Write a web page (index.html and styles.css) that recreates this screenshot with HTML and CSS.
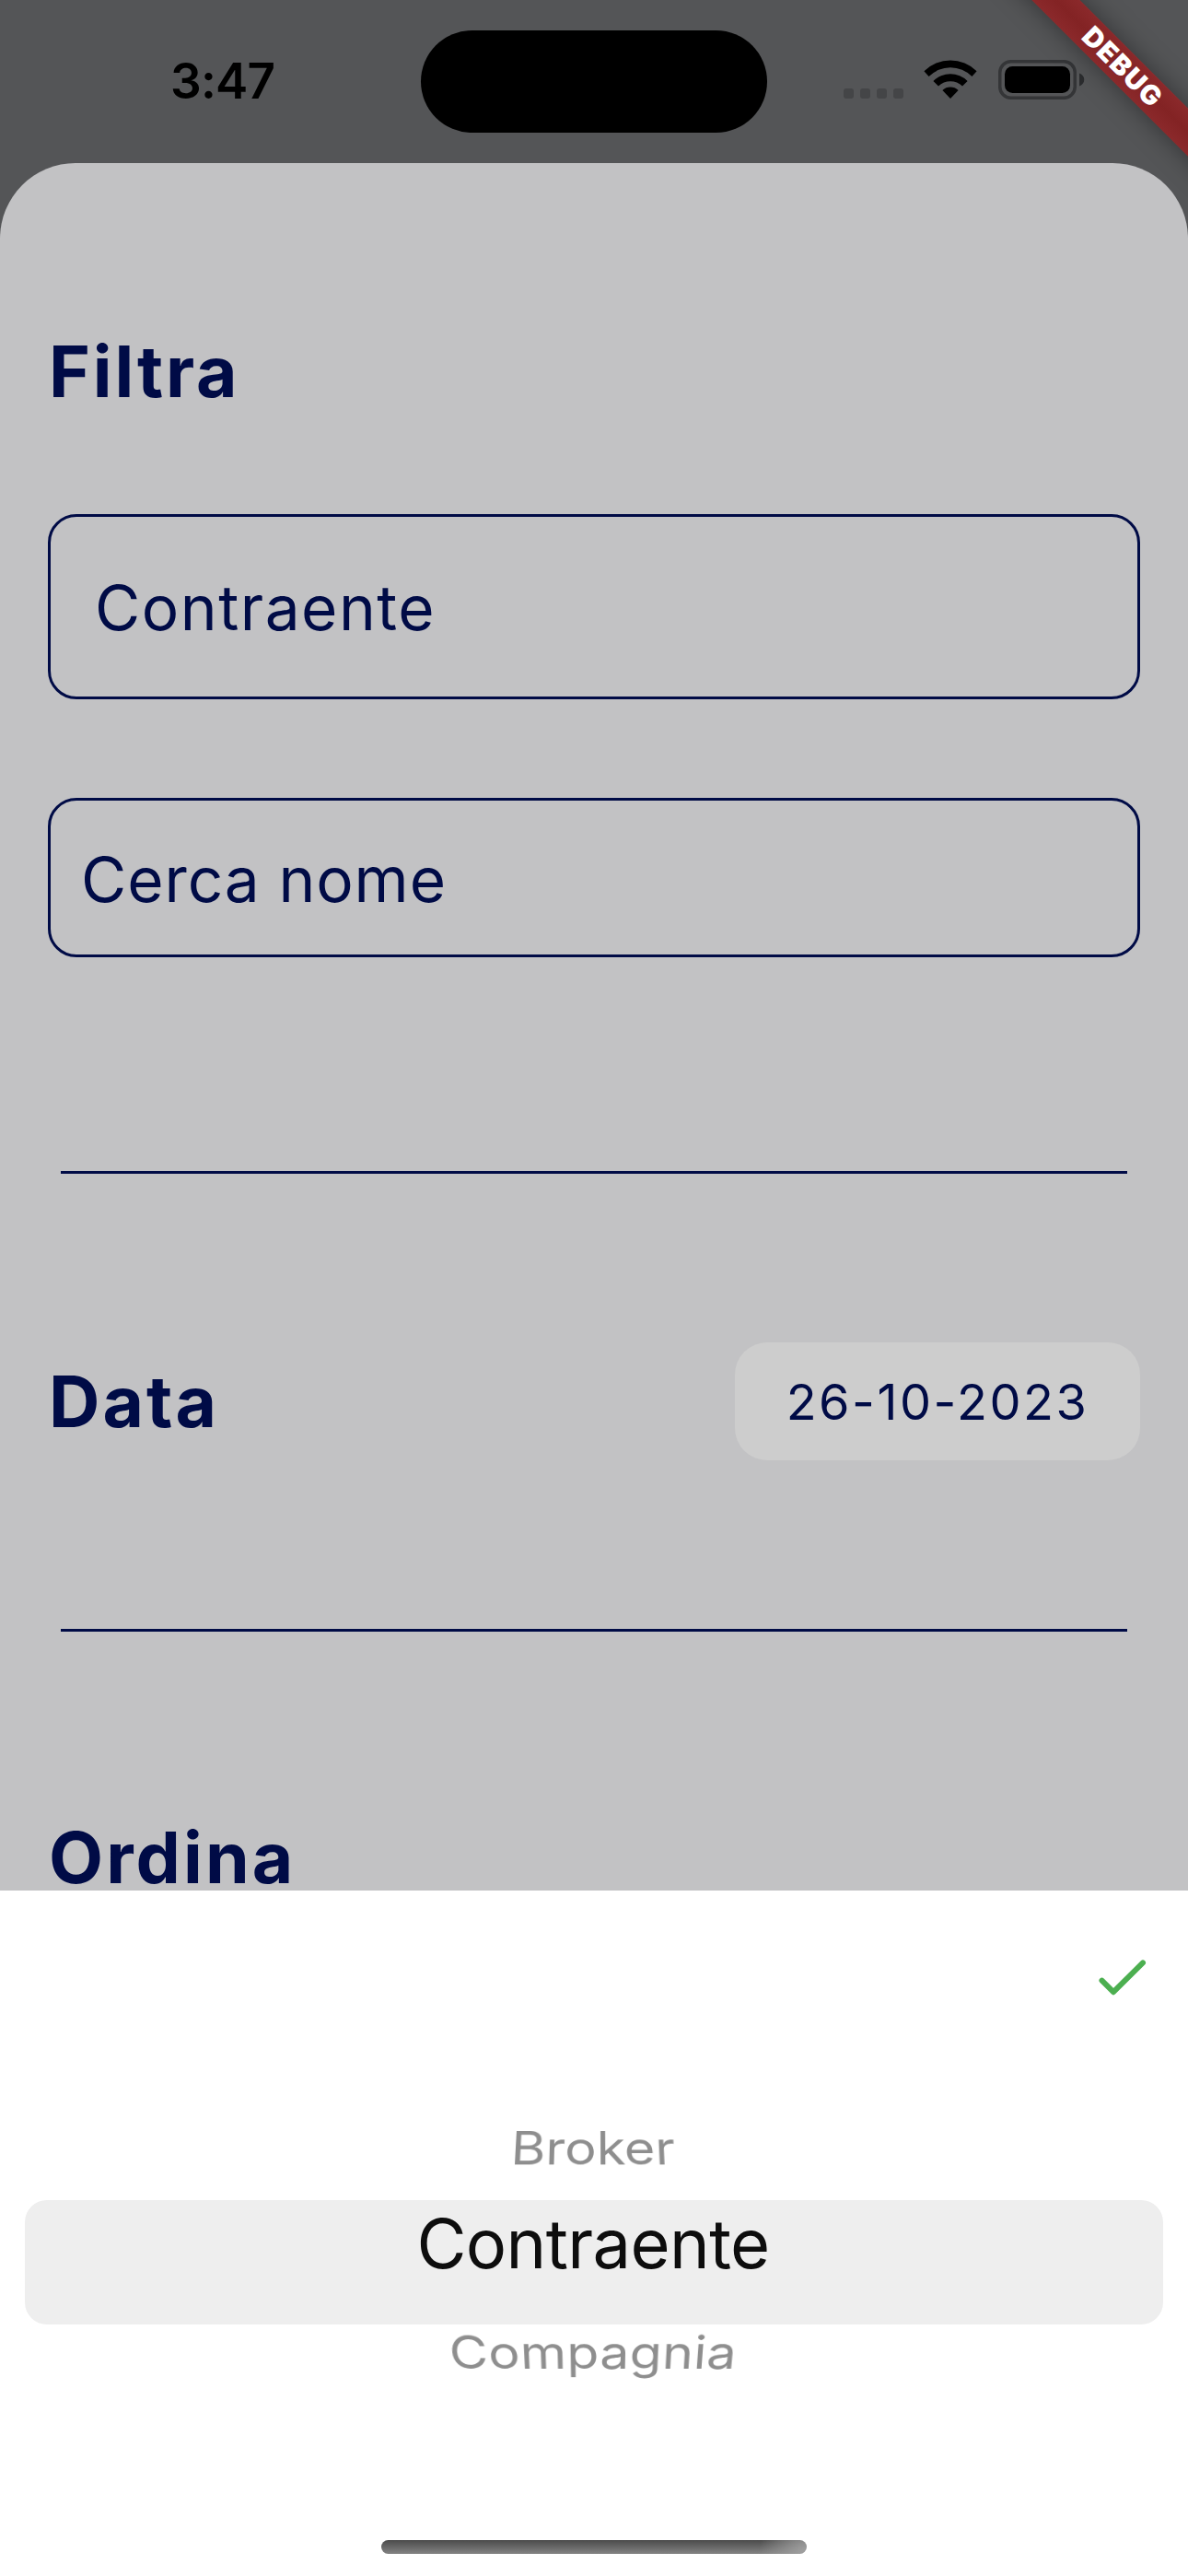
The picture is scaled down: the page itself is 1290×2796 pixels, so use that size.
FILE: index.html
```
<!DOCTYPE html>
<html lang="it">
<head>
<meta charset="utf-8">
<title>Filtra</title>
<link rel="stylesheet" href="styles.css">
</head>
<body>
<div class="screen">
  <header class="status-bar">
    <time class="clock">3:47</time>
    <div class="island"></div>
    <div class="indicators">
      <div class="signal"><i></i><i></i><i></i><i></i></div>
      <svg class="wifi" viewBox="0 0 58 42" width="58" height="42">
        <path d="M0.4 12.3 A40.6 40.6 0 0 1 57.6 12.3 L52.4 18 A33 33 0 0 0 5.6 18 Z"/>
        <path d="M10.4 22.9 A26.5 26.5 0 0 1 47.6 22.9 L42 28.5 A18.5 18.5 0 0 0 16 28.5 Z"/>
        <path d="M20.4 33 A12.5 12.5 0 0 1 37.6 33 L29 42 Z"/>
      </svg>
      <svg class="battery" viewBox="0 0 95 43" width="95" height="43">
        <rect x="1.75" y="1.75" width="81.5" height="39.5" rx="12" fill="none" stroke="#343537" stroke-width="3.5"/>
        <rect x="7" y="7" width="71" height="29" rx="8.5"/>
        <path d="M88 14.5 C95 17 95 26 88 28.5 Z" fill="#2b2c2e"/>
      </svg>
    </div>
  </header>

  <main class="sheet">
    <h1 class="heading">Filtra</h1>
    <div class="field field-select">Contraente</div>
    <div class="field field-search">Cerca nome</div>
    <hr class="rule">
    <section class="date-row">
      <h2 class="heading heading-data">Data</h2>
      <button class="date-chip">26-10-2023</button>
    </section>
    <hr class="rule">
    <h2 class="heading heading-data heading-order">Ordina</h2>
  </main>

  <section class="picker">
    <svg class="confirm" viewBox="0 0 56 44" width="56" height="44">
      <path d="M5.5 24.7 L18 37.2 L50 5.4"/>
    </svg>
    <div class="wheel">
      <div class="option option-above">Broker</div>
      <div class="option option-selected">Contraente</div>
      <div class="option option-below">Compagnia</div>
    </div>
    <div class="home-indicator"></div>
  </section>

  <div class="debug-banner">DEBUG</div>
</div>
</body>
</html>
```
FILE: styles.css
```
* {
  box-sizing: border-box;
}

body {
  margin: 0;
  font-family: Inter, "Liberation Sans", sans-serif;
}

.screen {
  position: relative;
  display: flex;
  flex-direction: column;
  width: 1290px;
  height: 2796px;
  overflow: hidden;
  background: #545557;
}

/* Status bar */
.status-bar {
  flex: none;
  display: grid;
  grid-template-columns: 457px 376px 1fr;
  height: 177px;
}

.clock {
  padding: 48px 0 0 185px;
  font-size: 53px;
  font-weight: 600;
  line-height: 80px;
  letter-spacing: -0.84px;
}

.island {
  height: 111px;
  margin-top: 33px;
  border-radius: 56px;
  background: #000;
}

.indicators {
  display: flex;
  align-items: flex-start;
  padding: 65px 0 0 83px;
}

.signal {
  display: flex;
  gap: 7px;
  margin-top: 31px;
}

.signal i {
  width: 11px;
  height: 11px;
  border-radius: 3px;
  background: #444547;
}

.wifi {
  margin-left: 22px;
}

.battery {
  margin-left: 23px;
}

/* Filter sheet */
.sheet {
  flex: none;
  display: flex;
  flex-direction: column;
  height: 1875px;
  padding: 181px 52px 0;
  border-radius: 82px 82px 0 0;
  background: #c2c2c4;
  color: #000b46;
}

.sheet > * {
  flex: none;
}

.heading {
  margin: 0 0 0 1px;
  font-size: 76.7px;
  font-weight: 700;
  line-height: 90px;
  letter-spacing: 2.8px;
}

.heading-data {
  letter-spacing: 3.08px;
}

.field {
  border: 3px solid #000b46;
  border-radius: 31px;
  font-size: 67.5px;
}

.field-select {
  height: 201px;
  margin-top: 110px;
  padding: 1px 48px 0;
  line-height: 195px;
  letter-spacing: 1.5px;
}

.field-search {
  height: 173px;
  margin-top: 107px;
  padding: 2px 33px 0;
  line-height: 167px;
  letter-spacing: 0.9px;
}

.rule {
  width: 1158px;
  height: 3px;
  margin: 232px auto 0;
  border: 0;
  background: #000b46;
}

.date-row {
  display: flex;
  align-items: center;
  justify-content: space-between;
  margin-top: 183px;
}

.date-chip {
  width: 440px;
  height: 128px;
  padding: 2px 0 0;
  border: 0;
  border-radius: 35px;
  background: #cdcdcd;
  color: inherit;
  font: 400 54px/126px Inter, "Liberation Sans", sans-serif;
  letter-spacing: 2.51px;
}

.date-row + .rule {
  margin-top: 183px;
}

.heading-order {
  margin-top: 210px;
  line-height: 70px;
}

/* Picker */
.picker {
  flex: 1;
  display: flex;
  flex-direction: column;
  padding: 73px 27px 24px;
  background: #fff;
}

.confirm {
  align-self: flex-end;
  margin-right: 16px;
}

.confirm path {
  fill: none;
  stroke: #4caf50;
  stroke-width: 6;
  stroke-linecap: round;
  stroke-linejoin: round;
}

.wheel {
  margin-top: 117px;
}

.option {
  text-align: center;
}

.option-above,
.option-below {
  height: 60px;
  padding-right: 2px;
  color: #8e8e8e;
  font-size: 57.4px;
  line-height: 60px;
}

.option-above {
  margin-top: 15px;
  margin-bottom: 27px;
  transform: perspective(900px) rotateX(30deg);
}

.option-selected {
  height: 135px;
  padding-right: 2px;
  border-radius: 24px;
  background: #eee;
  color: #0d0d0d;
  font-size: 74px;
  line-height: 94px;
  letter-spacing: -0.61px;
}

.option-below {
  letter-spacing: 0.3px;
  transform: perspective(900px) rotateX(-30deg);
}

.home-indicator {
  width: 462px;
  height: 15px;
  margin: auto auto 0;
  border-radius: 8px;
  background:
    radial-gradient(circle at 100% 100%, #a2a2a2, transparent 52px),
    linear-gradient(#4b4b4b, #838383);
}

/* Corner banner */
.debug-banner {
  position: absolute;
  top: 53px;
  left: 1018px;
  width: 400px;
  height: 36.5px;
  background: linear-gradient(#8b292b, #832324 50%, #8b292b);
  box-shadow: 0 0 28px rgba(0, 0, 0, 0.4);
  color: #fff;
  font-size: 29.5px;
  font-weight: 900;
  line-height: 36px;
  letter-spacing: 1.4px;
  text-align: center;
  text-indent: 4px;
  transform: rotate(45deg);
}
```
